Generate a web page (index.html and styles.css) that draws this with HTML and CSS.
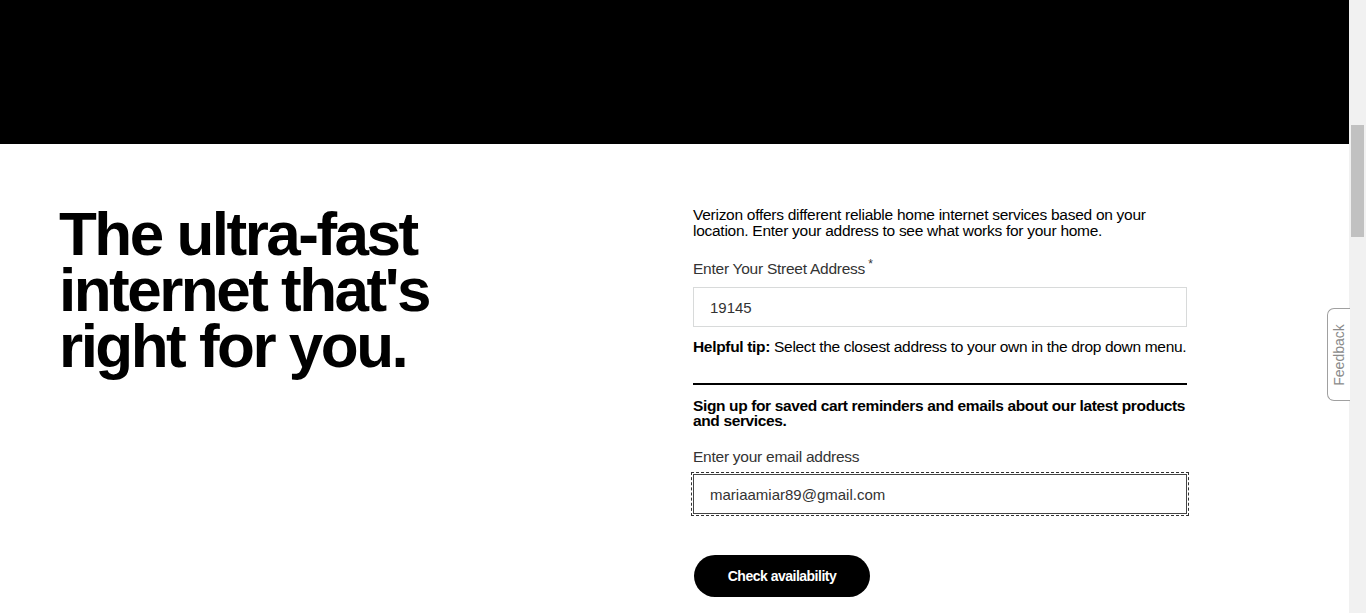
FILE: index.html
```html
<!DOCTYPE html>
<html lang="en">
<head>
<meta charset="utf-8">
<title>Verizon Home Internet</title>
<link rel="stylesheet" href="styles.css">
</head>
<body>
<div class="page">
  <div class="main">
    <header class="topbar"></header>
    <section class="hero">
      <div class="hero-left">
        <h1 class="headline">The ultra-fast<br>internet that's<br>right for you.</h1>
      </div>
      <div class="hero-right">
        <p class="intro">Verizon offers different reliable home internet services based on your location. Enter your address to see what works for your home.</p>
        <label class="field-label label-address" for="addr">Enter Your Street Address<span class="req">*</span></label>
        <input id="addr" class="text-input" type="text" value="19145">
        <p class="tip"><b>Helpful tip:</b> Select the closest address to your own in the drop down menu.</p>
        <div class="rule"></div>
        <p class="signup">Sign up for saved cart reminders and emails about our latest products and services.</p>
        <label class="field-label label-email" for="email">Enter your email address</label>
        <div class="focus-ring">
          <input id="email" class="text-input text-input-active" type="text" value="mariaamiar89@gmail.com">
        </div>
        <button class="cta" type="button">Check availability</button>
      </div>
    </section>
  </div>
  <div class="scrollbar"><div class="thumb"></div></div>
</div>
<div class="feedback"><span class="feedback-text">Feedback</span></div>
</body>
</html>
```

FILE: styles.css
```css
* { box-sizing: border-box; }
html, body { margin: 0; padding: 0; overflow: hidden; height: 100%; }
body {
  font-family: "Liberation Sans", Arial, sans-serif;
  color: #000;
  background: #fff;
}
.page {
  display: flex;
  height: 613px;
}
.main {
  flex: 1;
  display: flex;
  flex-direction: column;
}
.topbar {
  height: 144px;
  background: #000;
}
.hero {
  display: flex;
  padding: 62px 0 0 59px;
}
.hero-left {
  width: 634px;
}
.headline {
  margin: 0;
  font-size: 62px;
  line-height: 56px;
  font-weight: 700;
  letter-spacing: -2.5px;
}
.hero-right {
  width: 494px;
  padding-top: 1px;
  display: flex;
  flex-direction: column;
  align-items: flex-start;
}
.intro {
  margin: 0;
  font-size: 15.5px;
  line-height: 16px;
  letter-spacing: -0.27px;
}
.field-label {
  display: block;
  font-size: 15.5px;
  line-height: 20px;
  color: #333;
  letter-spacing: -0.25px;
}
.req {
  font-size: 12px;
  vertical-align: 6px;
  margin-left: 3px;
}
.label-address { margin-top: 15px; }
.label-email { margin-top: 19px; }
.text-input {
  display: block;
  width: 494px;
  height: 40px;
  margin: 8px 0 0;
  padding: 0 16px;
  border: 1px solid #d8dada;
  border-radius: 0;
  font-family: "Liberation Sans", Arial, sans-serif;
  font-size: 15px;
  color: #333;
  background: #fff;
  outline: none;
}
.focus-ring {
  margin-top: 7px;
  outline: 1px dashed #333;
  outline-offset: 1px;
}
.text-input-active {
  margin: 0;
  border-color: #444;
}
.tip {
  margin: 10px 0 0;
  font-size: 15.5px;
  line-height: 20px;
  letter-spacing: -0.32px;
  color: #000;
}
.tip b { font-weight: 700; }
.rule {
  align-self: stretch;
  margin-top: 26px;
  height: 2px;
  background: #000;
}
.signup {
  margin: 13px 0 0;
  font-size: 15.5px;
  line-height: 15px;
  font-weight: 700;
  letter-spacing: -0.37px;
}
.cta {
  margin-top: 41px;
  margin-left: 1px;
  width: 176px;
  height: 42px;
  border: none;
  border-radius: 21px;
  background: #000;
  color: #fff;
  font-family: "Liberation Sans", Arial, sans-serif;
  font-size: 14px;
  font-weight: 700;
  letter-spacing: -0.5px;
  cursor: pointer;
}
.scrollbar {
  width: 17px;
  background: #f1f1f1;
  padding: 125px 2px 0;
}
.thumb {
  height: 112px;
  background: #c1c1c1;
}
.feedback {
  position: fixed;
  left: 1327px;
  top: 308px;
  width: 23px;
  height: 93px;
  border: 1px solid #a0a0a0;
  border-right: none;
  border-radius: 7px 0 0 7px;
  background: #fff;
  display: flex;
  align-items: center;
  justify-content: center;
}
.feedback-text {
  transform: rotate(-90deg);
  font-family: "Liberation Sans", Arial, sans-serif;
  font-size: 14px;
  color: #8a8a8a;
  white-space: nowrap;
}
```
